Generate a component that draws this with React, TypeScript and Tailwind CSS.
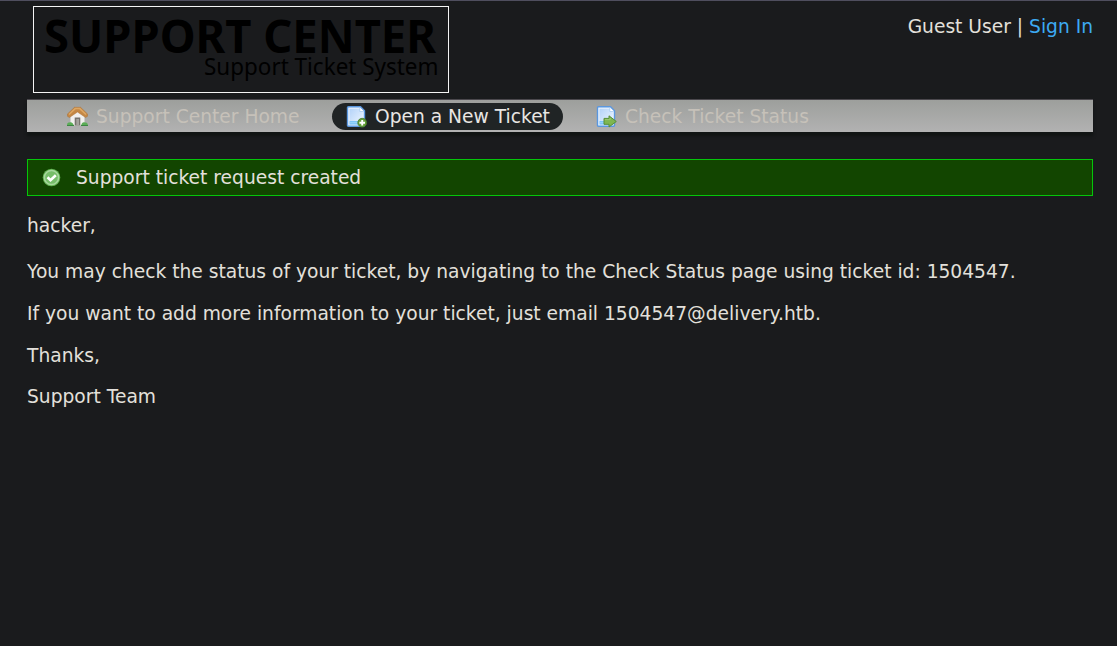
import React from "react";

function Logo() {
  return (
    <svg width="416" height="87" viewBox="0 0 416 87" className="block overflow-visible" role="img">
      <rect x="0.5" y="0.5" width="415" height="86" fill="none" stroke="#f4f4f4" />
      <text x="11" y="47" textLength="392" lengthAdjust="spacingAndGlyphs" fill="#000" className="font-['Noto_Sans',sans-serif] text-[46px] font-bold">
        SUPPORT CENTER
      </text>
      <text x="171" y="69" textLength="234.500" lengthAdjust="spacingAndGlyphs" fill="#000" className="font-['Noto_Sans',sans-serif] text-[23px]">
        Support Ticket System
      </text>
    </svg>
  );
}

function HomeIcon() {
  return (
    <svg width="21" height="21" viewBox="0 0 21 21" className="block shrink-0">
      <path d="M3.500 9 10.500 4 17.500 9v10.500h-14z" fill="#f1f0ee" />
      <path d="M7.700 11.500h5.600v8H7.700z" fill="#77736d" />
      <path d="M9.300 13H12v6.500H9.300z" fill="#a5a39e" />
      <path d="M7.500 1.300h6L20.600 8v2.200l-2 1.300L10.500 6 2.400 11.500.4 10.200V8z" fill="#c48744" stroke="#ad7239" strokeWidth=".5" />
      <path d="M2 8.500 8.200 2.600h4.600L19 8.500" fill="none" stroke="#dda763" strokeWidth="1.500" />
      <path d="M0 20c0-3 1-4 2.500-3.500C4 15.500 6.500 17 7 20zM14 20c.5-3 2-4.500 4-3.500 2-.5 3 1 3 3.500z" fill="#5bad56" />
      <path d="M0 19.500h7M14 19.500h7" stroke="#3d8443" />
    </svg>
  );
}

function Page({ id }: { id: string }) {
  return (
    <>
      <defs>
        <linearGradient id={id} x1="0" y1="0" x2="1" y2="1">
          <stop stopColor="#b4d3f8" />
          <stop offset="1" stopColor="#edf5ff" />
        </linearGradient>
      </defs>
      <path d="M2.500.8h12l4 4v14.500q0 1-1 1h-15q-1 0-1-1V1.800q0-1 1-1z" fill="#e7f2ff" stroke="#5a97df" strokeWidth="1.400" />
      <path d="M3.500 2.700h10.500l2.700 2.800v13H3.500z" fill={`url(#${id})`} />
      <path d="M13.800 1.600v3.900h4" fill="#fff" stroke="#9dc6f2" strokeWidth=".7" />
      <path d="M3.500 15h13v3.600h-13z" fill="#7cc6f8" />
      <path d="M3.500 16.700h13" stroke="#a9dbfd" strokeWidth=".7" />
    </>
  );
}

function NewIcon() {
  return (
    <svg width="21" height="21" viewBox="0 0 21 21" className="block shrink-0 overflow-visible">
      <Page id="newPage" />
      <circle cx="16.200" cy="16.700" r="4.400" fill="#659f39" stroke="#467b28" strokeWidth=".8" />
      <path d="M16.200 13.900v5.600M13.400 16.700H19" stroke="#fff" strokeWidth="1.900" />
    </svg>
  );
}

function StatusIcon() {
  return (
    <svg width="21" height="21" viewBox="0 0 21 21" className="block shrink-0 overflow-visible">
      <Page id="statusPage" />
      <path d="M8 12.400h5V9.800l7.300 5.700-7.300 5.500v-2.700H8z" fill="#7fb650" stroke="#568f38" strokeWidth="1" />
      <path d="M9 13.600h5.200v-1.500" fill="none" stroke="#a2ce78" strokeWidth=".8" />
    </svg>
  );
}

function OkIcon() {
  return (
    <svg width="19" height="19" viewBox="0 0 19 19" className="block shrink-0">
      <circle cx="9.500" cy="9.500" r="8.800" fill="#62b351" />
      <circle cx="9.500" cy="9.500" r="7.100" fill="#76bd69" stroke="#a8d79f" strokeWidth="1.500" />
      <path d="m5.500 9.300 3 2.900 5.300-5" fill="none" stroke="#fff" strokeWidth="2.600" />
    </svg>
  );
}

export default function App() {
  return (
    <div className="h-[646px] overflow-hidden border-t border-[#4f4e5e] bg-[#1a1b1d] pl-[27px] pr-6 font-['DejaVu_Sans',sans-serif] text-[18.667px] leading-[22px] text-[#e3e0db]">
      <header className="flex h-[98px] items-start justify-between pl-1.5 pt-[5px]">
        <Logo />
        <p className="pt-2.5">
          Guest User | <a className="text-[#3daaf2]">Sign In</a>
        </p>
      </header>
      <nav className="flex h-[33px] items-center border-t border-[#4b484d] bg-linear-to-b from-[#9d9f9c] to-[#b2b2b2] pl-10 text-[#c6c1b9] shadow-[0_4px_3px_#101413]">
        <a className="flex w-[265px] items-center gap-2"><HomeIcon /><span className="pt-0.5">Support Center Home</span></a>
        <a className="flex h-[27px] w-[231px] items-center gap-2 rounded-full bg-[#202425] pl-3.5 text-[#e8e6e3]"><NewIcon /><span className="pt-0.5">Open a New Ticket</span></a>
        <a className="ml-[33px] flex items-center gap-2"><StatusIcon /><span className="pt-0.5">Check Ticket Status</span></a>
      </nav>
      <div className="mt-[27px] flex h-[37px] items-center gap-[15px] border border-[#05c50a] bg-[#124500] pl-3.5">
        <OkIcon />Support ticket request created
      </div>
      <main>
        <p className="mt-[19px]">hacker,</p>
        <p className="mt-6">You may check the status of your ticket, by navigating to the Check Status page using ticket id: 1504547.</p>
        <p className="mt-5">If you want to add more information to your ticket, just email 1504547@delivery.htb.</p>
        <p className="mt-5">Thanks,</p>
        <p className="mt-[19px]">Support Team</p>
      </main>
    </div>
  );
}
